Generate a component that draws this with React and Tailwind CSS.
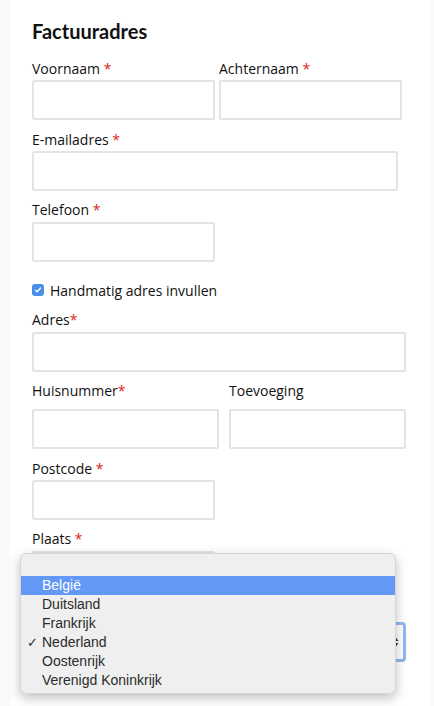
import React from 'react';

const Star = () => <span className="text-[#e2231a]">*</span>;

function Field({ label, required, tight, width, gap = 'mt-[1px]', className = '' }) {
  return (
    <div className={className}>
      <label className="block text-[14px] leading-[20px] text-[#111]">
        {label}
        {required && (tight ? <Star /> : <> <Star /></>)}
      </label>
      <input
        type="text"
        className={`${gap} ${width} block h-[40px] border-2 border-[#e4e4e4] rounded-[2px] bg-white outline-none`}
      />
    </div>
  );
}

const countries = ['België', 'Duitsland', 'Frankrijk', 'Nederland', 'Oostenrijk', 'Verenigd Koninkrijk'];

export default function App() {
  return (
    <div className="min-h-[706px] bg-[#fafafa] pl-[11px] pr-[3px] flex" style={{ fontFamily: '"Open Sans", sans-serif' }}>
      <div className="relative flex-1 bg-white pl-[21px] pt-[17px] pb-[40px]">
        <h2 className="text-[20px] leading-[28px] font-bold text-[#111] mb-[14px]" style={{ fontFamily: 'Lato, sans-serif' }}>
          Factuuradres
        </h2>

        <div className="flex gap-[4px]">
          <Field label="Voornaam" required width="w-[183px]" />
          <Field label="Achternaam" required width="w-[183px]" />
        </div>

        <Field label="E-mailadres" required width="w-[366px]" className="mt-[10px]" />
        <Field label="Telefoon" required width="w-[183px]" gap="mt-[2px]" className="mt-[9px]" />

        <div className="mt-[18px] flex items-center gap-[6px] h-[20px]">
          <span className="w-[12px] h-[12px] rounded-[3px] bg-[#4a8fe7] flex items-center justify-center">
            <svg width="8" height="8" viewBox="0 0 8 8" fill="none">
              <path d="M1.5 4.2 L3.2 5.8 L6.5 2" stroke="white" strokeWidth="1.4" strokeLinecap="round" strokeLinejoin="round" />
            </svg>
          </span>
          <span className="text-[14px] text-[#111]">Handmatig adres invullen</span>
        </div>

        <Field label="Adres" required tight width="w-[374px]" gap="mt-[2px]" className="mt-[10px]" />

        <div className="mt-[9px] flex gap-[10px]">
          <Field label="Huisnummer" required tight width="w-[187px]" gap="mt-[8px]" />
          <Field label="Toevoeging" width="w-[177px]" gap="mt-[8px]" />
        </div>

        <Field label="Postcode" required width="w-[183px]" className="mt-[10px]" />
        <Field label="Plaats" required width="w-[183px]" gap="mt-[2px]" className="mt-[9px]" />

        <div className="mt-[9px]">
          <label className="block text-[14px] leading-[20px] text-[#111]">
            Land <Star />
          </label>
          <div className="mt-[2px] w-[374px] h-[40px] rounded-[4px] border-[3px] border-[#8fb8f2] bg-white flex items-center justify-end pr-[4px]">
            <svg width="7" height="12" viewBox="0 0 7 12" fill="#333">
              <path d="M3.5 1 L6.5 5 L0.5 5 Z" />
              <path d="M3.5 11 L6.5 7 L0.5 7 Z" />
            </svg>
          </div>
        </div>

        <div
          className="absolute left-[9px] top-[553px] w-[376px] rounded-[6px] bg-[#efefef] border border-[#d6d6d6] shadow-[0_4px_12px_rgba(0,0,0,0.25)] py-[3px]"
          style={{ fontFamily: '"Liberation Sans", Arial, sans-serif' }}
        >
          <div className="h-[19px]" />
          {countries.map((c, i) => (
            <div
              key={c}
              className={`relative h-[19px] leading-[19px] pl-[21px] text-[14px] ${i === 0 ? 'bg-[#6299f6] text-white' : 'text-[#2b2b2b]'}`}
            >
              {c === 'Nederland' && <span className="absolute left-[6px] top-0 text-[13px]">✓</span>}
              {c}
            </div>
          ))}
        </div>
      </div>
    </div>
  );
}
